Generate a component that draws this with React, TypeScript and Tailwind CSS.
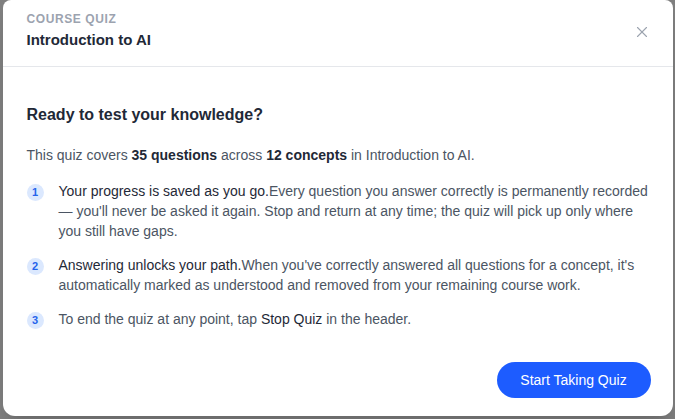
import { X } from 'lucide-react';

const steps = [
  {
    lead: 'Your progress is saved as you go.',
    rest: "Every question you answer correctly is permanently recorded — you'll never be asked it again. Stop and return at any time; the quiz will pick up only where you still have gaps.",
  },
  {
    lead: 'Answering unlocks your path.',
    rest: "When you've correctly answered all questions for a concept, it's automatically marked as understood and removed from your remaining course work.",
  },
];

function StepBadge({ n }: { n: number }) {
  return (
    <span className="mt-[3px] flex size-[17px] shrink-0 items-center justify-center rounded-full bg-[#dbe8fe] text-[11px] font-bold text-[#2563eb]">
      {n}
    </span>
  );
}

export default function App() {
  return (
    <div className="flex h-screen w-full justify-center bg-[#7f7f7f] font-['Liberation_Sans',Arial,sans-serif]">
      <div className="flex h-[416px] w-[670px] flex-col rounded-b-xl rounded-t-lg bg-white shadow-xl">
        {/* header */}
        <div className="flex items-start justify-between border-b border-[#e5e7eb] px-6 pb-4 pt-[11px]">
          <div className="flex flex-col gap-[3px]">
            <span className="text-xs leading-4 font-bold uppercase tracking-wider text-[#9ca3af]">Course Quiz</span>
            <span className="text-[15px] leading-5 font-bold text-[#1f2937]">Introduction to AI</span>
          </div>
          <button className="-mr-[2px] mt-[12px] text-[#9ca3af]">
            <X size={18} strokeWidth={1.5} />
          </button>
        </div>

        {/* body */}
        <div className="flex flex-1 flex-col pl-6 pr-[22px] pt-9">
          <h2 className="text-base leading-6 font-bold text-[#1f2937]">Ready to test your knowledge?</h2>
          <p className="mt-[18px] text-sm leading-5 text-[#4b5563]">
            This quiz covers <b className="text-[#1f2937]">35 questions</b> across{' '}
            <b className="text-[#1f2937]">12 concepts</b> in Introduction to AI.
          </p>

          <ul className="mt-4 flex flex-col gap-[14px]">
            {steps.map((s, i) => (
              <li key={i} className="flex gap-[15px]">
                <StepBadge n={i + 1} />
                <p className="text-sm leading-5 text-[#4b5563]">
                  <span className="text-[#1f2937]">{s.lead}</span>
                  {s.rest}
                </p>
              </li>
            ))}
            <li className="flex gap-[15px]">
              <StepBadge n={3} />
              <p className="text-sm leading-5 text-[#4b5563]">
                To end the quiz at any point, tap <span className="text-[#1f2937]">Stop Quiz</span> in the header.
              </p>
            </li>
          </ul>

          <div className="mt-auto flex justify-end pb-[18px]">
            <button className="h-9 w-[154px] rounded-full bg-[#1d5cff] text-sm text-white">Start Taking Quiz</button>
          </div>
        </div>
      </div>
    </div>
  );
}
